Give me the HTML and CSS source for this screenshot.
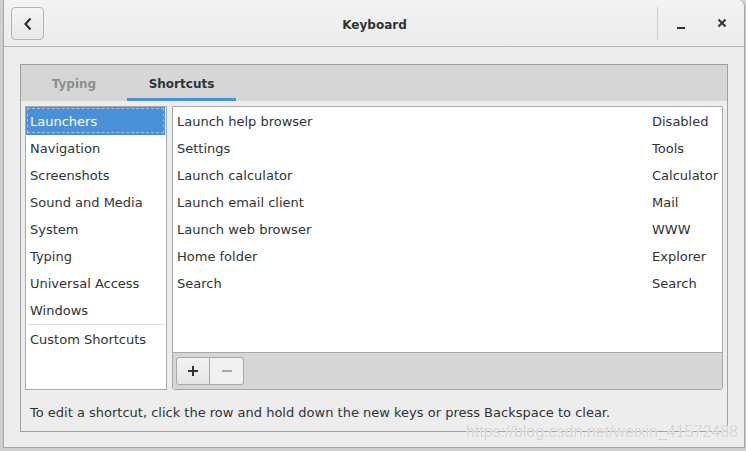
FILE: index.html
```html
<!DOCTYPE html>
<html>
<head>
<meta charset="utf-8">
<link rel="stylesheet" href="styles.css">
</head>
<body>
<div class="window">
  <header class="headerbar">
    <button class="back-btn" aria-label="Back">
      <svg width="10" height="14" viewBox="0 0 10 14"><path d="M7.5 1.5 L2.5 7 L7.5 12.5" fill="none" stroke="#2e3436" stroke-width="2.2"/></svg>
    </button>
    <div class="title">Keyboard</div>
    <div class="sep"></div>
    <div class="wm-btn minimize"><svg width="10" height="10" viewBox="0 0 10 10"><rect x="1" y="7" width="8" height="2" fill="#2e3436"/></svg></div>
    <div class="wm-btn close"><svg width="10" height="10" viewBox="0 0 10 10"><path d="M1.5 1.5 L8.5 8.5 M8.5 1.5 L1.5 8.5" stroke="#2e3436" stroke-width="2"/></svg></div>
  </header>
  <main class="content">
    <div class="notebook">
      <div class="tabs">
        <div class="tab">Typing</div>
        <div class="tab active">Shortcuts</div>
      </div>
      <div class="page">
        <div class="panes">
          <ul class="sections">
            <li class="selected"><span>Launchers</span></li>
            <li>Navigation</li>
            <li>Screenshots</li>
            <li>Sound and Media</li>
            <li>System</li>
            <li>Typing</li>
            <li>Universal Access</li>
            <li>Windows</li>
            <li class="custom">Custom Shortcuts</li>
          </ul>
          <div class="shortcuts">
            <ul class="list">
              <li><span>Launch help browser</span><span class="key">Disabled</span></li>
              <li><span>Settings</span><span class="key">Tools</span></li>
              <li><span>Launch calculator</span><span class="key">Calculator</span></li>
              <li><span>Launch email client</span><span class="key">Mail</span></li>
              <li><span>Launch web browser</span><span class="key">WWW</span></li>
              <li><span>Home folder</span><span class="key">Explorer</span></li>
              <li><span>Search</span><span class="key">Search</span></li>
            </ul>
            <div class="toolbar">
              <div class="btn-group">
                <button class="tb-btn">
                  <svg width="12" height="12" viewBox="0 0 12 12"><path d="M6 1 V11 M1 6 H11" stroke="#2e3436" stroke-width="2"/></svg>
                </button>
                <button class="tb-btn disabled">
                  <svg width="12" height="12" viewBox="0 0 12 12"><path d="M1 6 H11" stroke="#a8aaa8" stroke-width="2"/></svg>
                </button>
              </div>
            </div>
          </div>
        </div>
        <p class="hint">To edit a shortcut, click the row and hold down the new keys or press Backspace to clear.</p>
      </div>
    </div>
    <div class="watermark">https://blog.csdn.net/weixin_41572488</div>
  </main>
</div>
</body>
</html>
```

FILE: styles.css
```css
* { box-sizing: border-box; }
html, body {
  margin: 0;
  padding: 0;
  width: 746px;
  height: 451px;
  overflow: hidden;
}
body {
  background: #cfcfcf;
  font-family: "DejaVu Sans", sans-serif;
  font-size: 13px;
  color: #2e3436;
}
.window {
  margin-left: 3px;
  width: 742px;
  height: 448px;
  border: 1px solid #a6a6a6;
  border-top: none;
  border-top-right-radius: 7px;
  background: #ededed;
  display: flex;
  flex-direction: column;
  overflow: hidden;
}
.headerbar {
  height: 47px;
  flex: none;
  display: flex;
  align-items: center;
  padding: 0 0 0 7px;
  background: linear-gradient(#f3f3f3, #ebebeb);
  border-bottom: 1px solid #b5b5b5;
}
.back-btn {
  width: 33px;
  height: 33px;
  border: 1px solid #b5b5b5;
  border-radius: 4px;
  background: linear-gradient(#f4f4f4, #e8e8e8);
  display: flex;
  align-items: center;
  justify-content: center;
  padding: 0;
  margin-top: 1px;
}
.title {
  flex: 1;
  text-align: center;
  font-weight: bold;
  font-size: 12px;
  color: #2e3436;
  padding-left: 48px;
  padding-top: 4px;
}
.sep {
  width: 1px;
  height: 33px;
  background: #cfcfcf;
  margin-top: 1px;
}
.wm-btn {
  display: flex;
  align-items: center;
  justify-content: center;
}
.minimize { width: 38px; margin-left: 4px; padding-top: 3px; }
.close { width: 38px; margin-left: 3px; margin-right: 3px; }
.content {
  flex: 1;
  padding: 17px 16px 16px 16px;
  position: relative;
}
.notebook {
  border: 1px solid #a1a1a1;
  height: 368px;
  display: flex;
  flex-direction: column;
  background: #ededed;
}
.tabs {
  height: 36px;
  flex: none;
  background: #d6d6d6;
  display: flex;
  padding-left: 0;
}
.tab {
  width: 106px;
  text-align: center;
  font-weight: bold;
  font-size: 12px;
  color: #8b8e8f;
  line-height: 34px;
  padding-top: 2px;
}
.tab.active {
  color: #2e3436;
  width: 109px;
  border-bottom: 3px solid #4a90d9;
}
.page {
  flex: 1;
  display: flex;
  flex-direction: column;
  padding: 5px 4px 0 4px;
}
.panes {
  display: flex;
  gap: 5px;
  height: 284px;
  flex: none;
}
ul { list-style: none; margin: 0; padding: 0; }
.sections {
  width: 142px;
  background: #fff;
  border: 1px solid #a8a8a8;
  padding: 0;
}
.sections li {
  height: 27px;
  line-height: 27px;
  padding-left: 4px;
}
.sections li.selected {
  background: #4a90d9;
  color: #fff;
  margin-right: 1px;
  height: 28px;
  padding: 1px 1px 2px 1px;
}
.sections li.selected span {
  display: block;
  height: 25px;
  line-height: 25px;
  border: 1px dashed #9fc3ea;
  padding-left: 2px;
}
.sections li.custom {
  margin: 0 1px 0 2px;
  border-top: 1px solid #e0e0e0;
  padding-left: 2px;
  height: 30px;
  line-height: 30px;
}
.shortcuts {
  flex: 1;
  display: flex;
  flex-direction: column;
  border: 1px solid #a8a8a8;
  border-radius: 0 0 3px 3px;
  overflow: hidden;
}
.list {
  flex: 1;
  background: #fff;
  padding-top: 1px;
}
.list li {
  height: 27px;
  line-height: 27px;
  display: flex;
  padding-left: 4px;
}
.list li span:first-child { flex: 1; }
.list li .key { width: 70px; }
.toolbar {
  height: 37px;
  flex: none;
  background: #d6d6d6;
  border-top: 1px solid #a8a8a8;
  padding: 4px 0 0 3px;
}
.btn-group { display: flex; }
.tb-btn {
  width: 34px;
  height: 28px;
  padding: 0;
  display: flex;
  align-items: center;
  justify-content: center;
  border: 1px solid #a8a8a8;
  background: linear-gradient(#f2f2f2, #e6e6e6);
  border-radius: 3px 0 0 3px;
}
.tb-btn.disabled {
  border-left: none;
  border-radius: 0 3px 3px 0;
  background: #f0f0f0;
  width: 34px;
}
.hint {
  margin: 0;
  padding: 15px 0 0 5px;
  font-size: 13px;
}
.watermark {
  position: absolute;
  right: 6px;
  bottom: 7px;
  font-family: "Liberation Sans", sans-serif;
  font-size: 16px;
  color: #d2d2d2;
  text-shadow: 0 0 1px #ffffff, 0 0 1px #ffffff;
}
```
